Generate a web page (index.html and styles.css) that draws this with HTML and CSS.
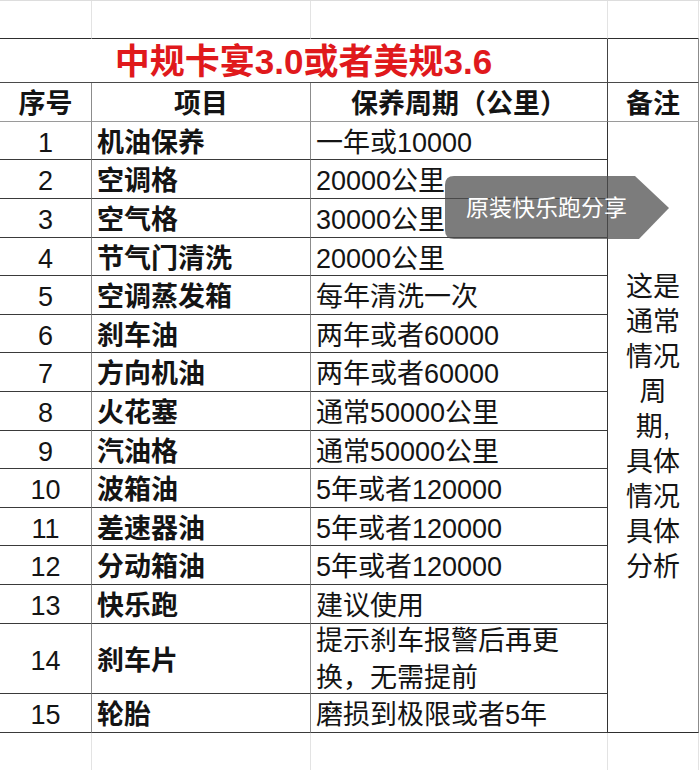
FILE: index.html
```html
<!DOCTYPE html>
<html lang="zh-CN">
<head>
<meta charset="utf-8">
<title>保养周期</title>
<link rel="stylesheet" href="styles.css">
</head>
<body>
<div class="sheet">
  <div class="grid">
    <div class="c blank"></div>
    <div class="c blank"></div>
    <div class="c blank"></div>
    <div class="c blank"></div>

    <div class="c title">中规卡宴3.0或者美规3.6</div>
    <div class="c title-side"></div>

    <div class="c head num">序号</div>
    <div class="c head mid">项目</div>
    <div class="c head mid col3">保养周期（公里）</div>
    <div class="c head mid last">备注</div>

    <div class="c num">1</div><div class="c item">机油保养</div><div class="c val">一年或10000</div>
    <div class="c note">这是<br>通常<br>情况<br>周<br>期,<br>具体<br>情况<br>具体<br>分析</div>
    <div class="c num">2</div><div class="c item">空调格</div><div class="c val">20000公里</div>
    <div class="c num">3</div><div class="c item">空气格</div><div class="c val">30000公里</div>
    <div class="c num">4</div><div class="c item">节气门清洗</div><div class="c val">20000公里</div>
    <div class="c num">5</div><div class="c item">空调蒸发箱</div><div class="c val">每年清洗一次</div>
    <div class="c num">6</div><div class="c item">刹车油</div><div class="c val">两年或者60000</div>
    <div class="c num">7</div><div class="c item">方向机油</div><div class="c val">两年或者60000</div>
    <div class="c num">8</div><div class="c item">火花塞</div><div class="c val">通常50000公里</div>
    <div class="c num">9</div><div class="c item">汽油格</div><div class="c val">通常50000公里</div>
    <div class="c num">10</div><div class="c item">波箱油</div><div class="c val">5年或者120000</div>
    <div class="c num">11</div><div class="c item">差速器油</div><div class="c val">5年或者120000</div>
    <div class="c num">12</div><div class="c item">分动箱油</div><div class="c val">5年或者120000</div>
    <div class="c num">13</div><div class="c item">快乐跑</div><div class="c val">建议使用</div>
    <div class="c num">14</div><div class="c item">刹车片</div><div class="c val two">提示刹车报警后再更<br>换，无需提前</div>
    <div class="c num">15</div><div class="c item">轮胎</div><div class="c val">磨损到极限或者5年</div>

    <div class="c blank bottom"></div>
    <div class="c blank bottom"></div>
    <div class="c blank bottom"></div>
    <div class="c blank bottom"></div>
  </div>

  <div class="tip">
    <svg class="tip-shape" width="224" height="63" viewBox="0 0 224 63" aria-hidden="true">
      <path d="M9 0 H190 L224 32 L194 63 H9 Q0 63 0 54 V9 Q0 0 9 0 Z" fill="rgba(78,78,78,0.74)"/>
    </svg>
    <span class="tip-text">原装快乐跑分享</span>
  </div>
</div>
</body>
</html>
```

FILE: styles.css
```css
body {
  margin: 0;
  background: #ffffff;
}

.sheet {
  position: relative;
  width: 700px;
  height: 770px;
  overflow: hidden;
  font-family: "Liberation Sans", "Noto Sans CJK SC", sans-serif;
  color: #141414;
}

.grid {
  display: grid;
  grid-template-columns: 92px 219px 297px 91px;
  grid-template-rows: 38px 44px 39px 38px 39px 39px 38px 39px 38px 39px 39px 38px 39px 38px 39px 39px 70px 39px 38px;
  border-top: 1px solid #dddddd;
}

.c {
  box-sizing: border-box;
  display: flex;
  align-items: center;
  padding-top: 5px;
  border-right: 1px solid #8c8c8c;
  border-bottom: 1px solid #3a3a3a;
  font-size: 27px;
  line-height: 1.2;
  white-space: nowrap;
}

.blank {
  padding-top: 0;
  border-right-color: #e3e3e3;
  border-bottom-color: #2e2e2e;
}

.blank.bottom {
  border-bottom-color: #222222;
}

.title {
  grid-column: span 3;
  justify-content: center;
  padding-top: 2px;
  color: #e0191c;
  font-weight: bold;
  font-size: 35px;
  border-right-color: #444444;
  border-bottom-color: #4a4a4a;
}

.title-side {
  border-bottom-color: #4a4a4a;
}

.head {
  font-weight: bold;
  border-bottom-color: #9a9a9a;
}

.mid {
  justify-content: center;
}

.col3 {
  border-right-color: #444444;
}

.num {
  justify-content: center;
}

.item {
  font-weight: bold;
  padding-left: 5px;
}

.val {
  padding-left: 5px;
  border-right-color: #333333;
}

.val.two {
  padding-top: 3px;
  line-height: 37px;
  white-space: normal;
}

.note {
  grid-row: span 15;
  justify-content: center;
  padding-top: 0;
  text-align: center;
  line-height: 35px;
  border-bottom-color: #2e2e2e;
}

.tip {
  position: absolute;
  left: 445px;
  top: 176px;
  width: 224px;
  height: 63px;
}

.tip-shape {
  position: absolute;
  left: 0;
  top: 0;
}

.tip-text {
  position: relative;
  display: block;
  padding: 17px 0 0 21px;
  color: #ffffff;
  font-size: 23px;
  line-height: 30px;
  white-space: nowrap;
}
```
